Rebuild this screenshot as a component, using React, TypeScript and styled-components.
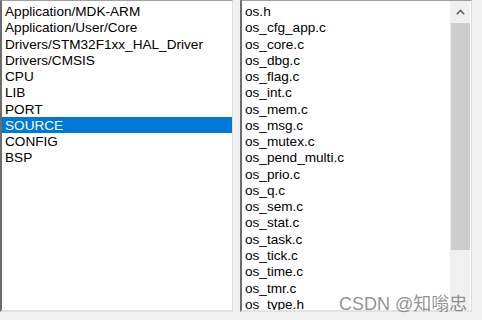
import React from "react";
import styled, { createGlobalStyle } from "styled-components";

const GlobalStyle = createGlobalStyle`
  html, body {
    margin: 0;
    padding: 0;
    background: #f0f0f0;
  }
`;

const Page = styled.div`
  position: relative;
  width: 482px;
  height: 320px;
  overflow: hidden;
  display: flex;
  gap: 7px;
  box-sizing: border-box;
  font-family: "Liberation Sans", Arial, sans-serif;
  font-size: 13.6px;
  color: #000;
`;

const ListBox = styled.div<{ $width: number }>`
  width: ${(p) => p.$width}px;
  height: 312px;
  box-sizing: border-box;
  background: #fff;
  border-top: 1px solid #a0a0a0;
  border-left: 2px solid #6d6d6d;
  border-right: 1px solid #dcdcdc;
  border-bottom: 2px solid #e3e3e3;
  display: flex;
  overflow: hidden;
`;

const Items = styled.ul`
  flex: 1;
  list-style: none;
  margin: 0;
  padding: 2px 0 0 0;
`;

const Item = styled.li<{ $selected?: boolean }>`
  height: 16.27px;
  line-height: 18px;
  padding-left: 3px;
  white-space: nowrap;
  overflow: hidden;
  background: ${(p) => (p.$selected ? "#0078d7" : "transparent")};
  color: ${(p) => (p.$selected ? "#fff" : "#000")};
`;

const ScrollBar = styled.div`
  width: 20px;
  margin-right: 1px;
  background: #f0f0f0;
  display: flex;
  flex-direction: column;
  align-items: center;
`;

const Arrow = styled.div`
  height: 22px;
  display: flex;
  align-items: center;
  justify-content: center;
`;

const Thumb = styled.div`
  width: 19px;
  height: 227px;
  background: #cdcdcd;
`;

const Watermark = styled.div`
  position: absolute;
  left: 339px;
  top: 289px;
  font-family: "Liberation Sans", "Noto Sans CJK SC", sans-serif;
  font-size: 18px;
  color: rgba(110, 110, 110, 0.75);
  white-space: nowrap;
`;

const folders = [
  "Application/MDK-ARM",
  "Application/User/Core",
  "Drivers/STM32F1xx_HAL_Driver",
  "Drivers/CMSIS",
  "CPU",
  "LIB",
  "PORT",
  "SOURCE",
  "CONFIG",
  "BSP",
];

const files = [
  "os.h",
  "os_cfg_app.c",
  "os_core.c",
  "os_dbg.c",
  "os_flag.c",
  "os_int.c",
  "os_mem.c",
  "os_msg.c",
  "os_mutex.c",
  "os_pend_multi.c",
  "os_prio.c",
  "os_q.c",
  "os_sem.c",
  "os_stat.c",
  "os_task.c",
  "os_tick.c",
  "os_time.c",
  "os_tmr.c",
  "os_type.h",
];

const App = () => {
  return (
    <>
      <GlobalStyle />
      <Page>
        <ListBox $width={233}>
          <Items>
            {folders.map((f) => (
              <Item key={f} $selected={f === "SOURCE"}>
                {f}
              </Item>
            ))}
          </Items>
        </ListBox>
        <ListBox $width={232}>
          <Items>
            {files.map((f) => (
              <Item key={f}>{f}</Item>
            ))}
          </Items>
          <ScrollBar>
            <Arrow>
              <svg width="9" height="6" viewBox="0 0 9 6">
                <path d="M0.8 5.2 L4.5 1.5 L8.2 5.2" fill="none" stroke="#606060" strokeWidth="1.6" />
              </svg>
            </Arrow>
            <Thumb />
          </ScrollBar>
        </ListBox>
        <Watermark>CSDN @知嗡忠</Watermark>
      </Page>
    </>
  );
};

export default App;
